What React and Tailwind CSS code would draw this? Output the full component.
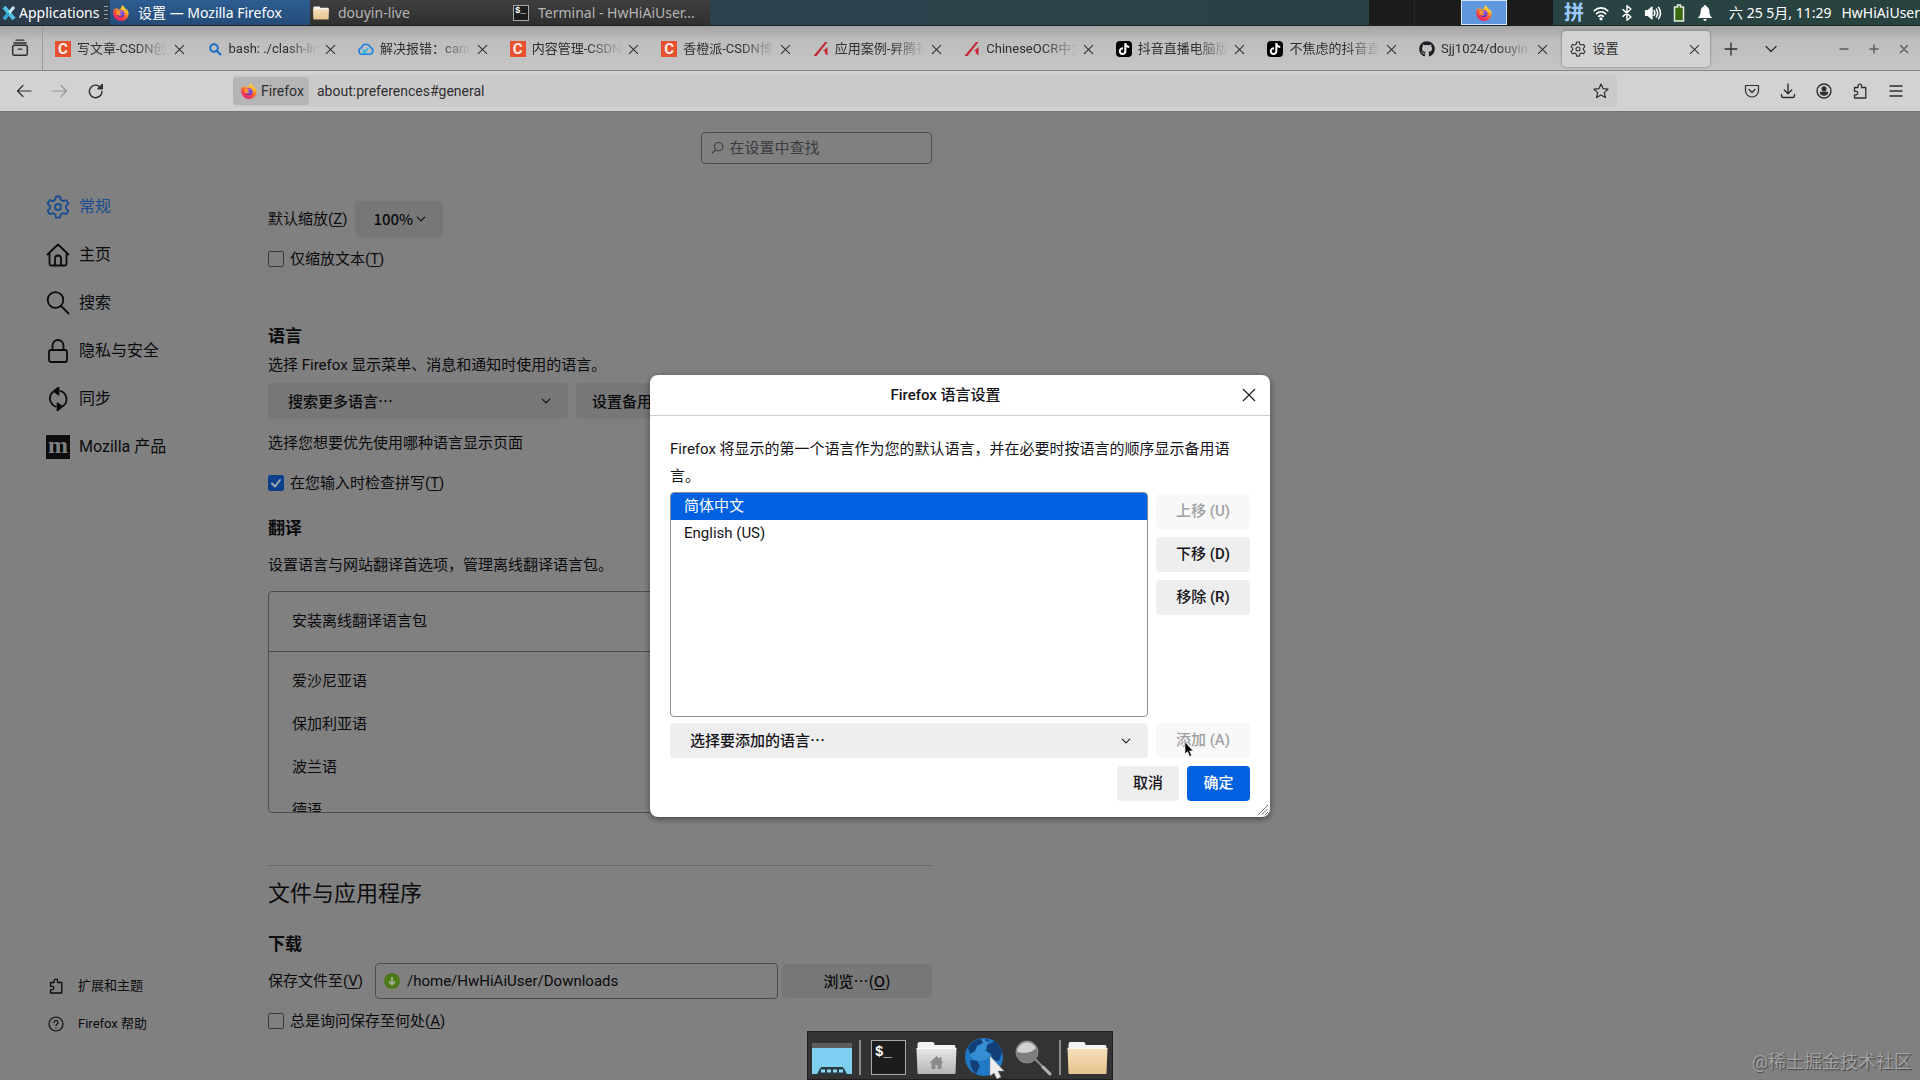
import React, { useId } from "react";
import { FaGithub, FaTiktok } from "react-icons/fa6";

const UI_FONT = 'Roboto, "Noto Sans CJK SC", sans-serif';
const CJK_FONT = '"Noto Sans CJK SC", sans-serif';

const strokeProps = {
  fill: "none",
  stroke: "currentColor",
  strokeLinecap: "round",
  strokeLinejoin: "round",
};

function Svg({ className, viewBox = "0 0 16 16", w = 1.2, children }) {
  return (
    <svg className={className} viewBox={viewBox} strokeWidth={w} aria-hidden="true" {...strokeProps}>
      {children}
    </svg>
  );
}

function FirefoxLogo({ className }) {
  const id = useId();
  return (
    <svg className={className} viewBox="0 0 32 32" aria-hidden="true">
      <defs>
        <linearGradient id={id + "f"} x1="0.8" y1="0" x2="0.25" y2="1">
          <stop offset="0" stopColor="#fff044" />
          <stop offset="0.3" stopColor="#ffb62b" />
          <stop offset="0.6" stopColor="#ff5634" />
          <stop offset="1" stopColor="#e8157c" />
        </linearGradient>
        <radialGradient id={id + "g"} cx="0.6" cy="0.3" r="0.8">
          <stop offset="0" stopColor="#9059ff" />
          <stop offset="1" stopColor="#5b2aa8" />
        </radialGradient>
      </defs>
      <path
        fill={`url(#${id}f)`}
        d="M30 12c-.7-1.800-2.200-3.700-3.300-4.300 1 1.900 1.500 3.700 1.700 5-1.800-4.500-4.900-6.300-7.400-10.300-.6-1-.7-1.600-.6-2.400-3.600 2-4.800 5.800-5 7.700-1.700.1-3.300.7-4.600 1.700-1.200-.9-1.800-2.700-1.700-4.600C6.700 5.900 5 8.200 4.600 9.800 3.600 9 3.500 7 3.900 5.600 1.500 8 0 12.500.5 17.500 1.300 25.500 8 32 16 32c8.500 0 15.200-6.700 15.200-15.200 0-1.700-.5-3.500-1.200-4.800z"
      />
      <circle cx="16" cy="17.500" r="7" fill={`url(#${id}g)`} />
      <path fill="#ff9a2e" d="M6 15c2-3 5-3.600 7.500-2.300 1.300.6 2.500.4 3 1.100-1 1.500-3.300 1-3.500 2.700 0 1.700 2 2.600 4.300 2-1.300 2.800-5.300 3.500-8 1.200C7.300 18.300 6.500 17 6 15z" />
    </svg>
  );
}

function FolderIcon({ className, home, gray }) {
  const id = useId();
  return (
    <svg className={className} viewBox="0 0 40 34" aria-hidden="true">
      <defs>
        <linearGradient id={id} x1="0" y1="0" x2="0" y2="1">
          <stop offset="0" stopColor={gray ? "#e8e8e8" : "#f6dfb9"} />
          <stop offset="1" stopColor={gray ? "#b5b5b5" : "#e6c38f"} />
        </linearGradient>
      </defs>
      <path fill="#f4f4f2" d="M1 4q0-3 2-3h13q2 0 2 3h20q1 0 1 3v4H1z" />
      <path fill={`url(#${id})`} d="M0 7h40l-1 25q0 1-1 1H2q-1 0-1-1z" />
      <path stroke="#fff" strokeOpacity="0.7" d="M0 7.500h40" />
      {home && <path fill="#8a8a8a" d="M13 22l7-7 3 3v-2h2v4l2 2h-2v6h-4v-4h-2v4h-4v-6z" />}
    </svg>
  );
}

function TerminalIcon({ className }) {
  return (
    <span className={className + " flex items-start border border-[#a9a9a9] bg-[#1c1c1c] font-bold text-white"} style={{ fontFamily: '"Liberation Mono", monospace' }}>
      <span>$_</span>
    </span>
  );
}

function Close({ className = "size-4" }) {
  return (
    <Svg className={className} w={1.1}>
      <path d="M3.500 3.500l9 9M12.500 3.500l-9 9" />
    </Svg>
  );
}
function Chevron({ className }) {
  return (
    <Svg className={className} w={1.4}>
      <path d="M3 5.500l5 5 5-5" />
    </Svg>
  );
}
function Gear({ className, w }) {
  return (
    <Svg className={className} viewBox="0 0 24 24" w={w}>
      <path d="M10 1.500h4l.8 3.300 2.300 1.300 3.300-1 2 3.500L20 11v2.400l2.400 2.200-2 3.500-3.300-1-2.300 1.400-.8 3.200h-4l-.8-3.200-2.300-1.400-3.300 1-2-3.500L4 13.300V11L1.600 8.600l2-3.500 3.300 1 2.300-1.300z" />
      <circle cx="12" cy="12" r="3" />
    </Svg>
  );
}
function Puzzle({ className }) {
  return (
    <Svg className={className} w={1.3}>
      <path d="M6 4.500V3a1.800 1.800 0 0 1 3.600 0v1.500h4.200V15H2.500v-3.200h1.600a1.700 1.700 0 0 0 0-3.400H2.500v-3.900z" />
    </Svg>
  );
}

const CsdnIcon = () => (
  <span className="flex size-4 items-center justify-center bg-[#e8502f] text-[15px] font-bold text-white/90">C</span>
);
const AscendIcon = () => (
  <svg className="size-4" viewBox="0 0 16 16" aria-hidden="true">
    <path fill="#c62430" d="M12 1h2.500L3.500 15H.5zM14.500 6v8.500l-3-2.500 1-1.500-2.500-.5z" />
  </svg>
);
const TiktokIcon = () => (
  <span className="flex size-4 items-center justify-center rounded bg-black text-white">
    <FaTiktok className="size-3" />
  </span>
);
const SearchTabIcon = () => (
  <svg className="size-4" viewBox="0 0 16 16" fill="none" stroke="#1d6fc4" strokeWidth="2" aria-hidden="true">
    <circle cx="7" cy="7" r="3.800" />
    <path d="M9.800 9.800l3.700 3.700" strokeLinecap="round" />
  </svg>
);
const CloudIcon = () => (
  <svg className="size-4" viewBox="0 0 16 16" fill="none" strokeWidth="1.600" aria-hidden="true">
    <path stroke="#1e7fe0" d="M4 13.300a3.300 3.300 0 0 1-.5-6.500A4.600 4.600 0 0 1 12.300 6.200 3.700 3.700 0 0 1 12 13.300z" />
    <path stroke="#22b8dd" d="M4.500 13l6-6M8.500 13l-4-4.500" />
  </svg>
);

const TABS = [
  ["写文章-CSDN创", CsdnIcon],
  ["bash: ./clash-lin", SearchTabIcon],
  ["解决报错：cann", CloudIcon],
  ["内容管理-CSDN", CsdnIcon],
  ["香橙派-CSDN博", CsdnIcon],
  ["应用案例-昇腾社", AscendIcon],
  ["ChineseOCR中文", AscendIcon],
  ["抖音直播电脑版", TiktokIcon],
  ["不焦虑的抖音直", TiktokIcon],
  ["Sjj1024/douyin", FaGithub],
];

function Taskbar() {
  return (
    <header
      className="flex h-[26px] shrink-0 items-stretch border-b border-[#1b2424] bg-linear-to-r from-[#2c4356] to-[#28423f] text-sm leading-none text-white"
      style={{ fontFamily: '"Noto Sans", "Noto Sans CJK SC", sans-serif' }}
    >
      <button className="flex w-[110px] items-center bg-[#2b3b4a] pl-0.5">
        <svg className="size-[14px] shrink-0" viewBox="0 0 14 14" aria-hidden="true">
          <path stroke="#4fc3e8" strokeWidth="4" d="M2 1l10 12" />
          <path stroke="#c4ebf7" strokeWidth="3" d="M12 1L2 13" />
          <path stroke="#2aa5d6" strokeWidth="3" d="M7 7l-5 6" />
        </svg>
        <span className="ml-[3px]">Applications</span>
        <span className="ml-auto mr-0.5 flex w-1 flex-col gap-[3px]">
          <i className="h-px bg-white/50" /><i className="h-px bg-white/50" /><i className="h-px bg-white/50" /><i className="h-px bg-white/50" />
        </span>
      </button>
      <button className="flex w-[200px] items-center bg-linear-to-b from-[#2d5d92] to-[#254b77] pl-[3px]">
        <FirefoxLogo className="size-4" />
        <span className="ml-[9px] whitespace-nowrap">设置 — Mozilla Firefox</span>
      </button>
      <button className="flex w-[200px] items-center bg-linear-to-b from-[#3f3f3f] to-[#2f2f2f] pl-[3px] text-[#b5b5b5]">
        <FolderIcon className="size-4" />
        <span className="ml-[9px]">douyin-live</span>
      </button>
      <button className="flex w-[200px] items-center bg-linear-to-b from-[#3f3f3f] to-[#2f2f2f] pl-[3px] text-[#b5b5b5]">
        <TerminalIcon className="size-4 pl-px pt-px text-[9px] leading-none" />
        <span className="ml-[9px] whitespace-nowrap">Terminal - HwHiAiUser...</span>
      </button>
      <div className="flex-1" />
      <div className="flex w-[184px] bg-[#1b1c1c]">
        <span className="w-[46px] border-r border-[#2a2b2b]" />
        <span className="w-[46px]" />
        <button aria-label="工作区 3" className="flex w-[46px] items-center justify-center border border-[#d6e4f5] bg-[#5e97dc]">
          <FirefoxLogo className="size-4" />
        </button>
        <span className="w-[46px]" />
      </div>
      <div className="flex w-[367px] items-center pl-[11px]">
        <span className="text-xl font-bold leading-none text-[#9cc9ff]">拼</span>
        <Svg className="ml-2 size-[18px]" w={1.5}>
          <path d="M2 6a8.500 8.500 0 0 1 12 0M4 8.600a5.500 5.500 0 0 1 8 0M6 11a2.800 2.800 0 0 1 4 0" />
          <circle cx="8" cy="13.200" r="0.700" fill="currentColor" />
        </Svg>
        <Svg className="ml-2 size-[18px]" w={1.3}>
          <path d="M4.500 5l7 6.500L8 14.500v-13L11.500 4.500l-7 6.500" />
        </Svg>
        <Svg className="ml-2 size-[18px]" w={1.4}>
          <path fill="currentColor" d="M1.500 6h2L7 3v10L3.500 10h-2z" />
          <path d="M9 6q1.200 2 0 4M11 4.500q2.200 3.500 0 7M13 3q3.300 5 0 10" />
        </Svg>
        <svg className="ml-2 h-[18px] w-[18px]" viewBox="0 0 18 18" aria-hidden="true">
          <path fill="#3a6b12" stroke="#e5eae5" strokeWidth="1.500" d="M4.500 3h3V1h3v2h3v14h-9z" />
        </svg>
        <svg className="ml-2 size-[18px]" viewBox="0 0 18 18" fill="#fff" aria-hidden="true">
          <path d="M9 1q1.200 0 1.200 1.200Q13 3.300 13.300 7q.2 5 3 7H1.700q2.800-2 3-7 .3-3.700 3.100-4.800Q7.800 1 9 1zM7.300 15h3.400q-.3 2-1.700 2t-1.700-2z" />
        </svg>
        <time className="ml-[15px] whitespace-nowrap">六 25 5月, 11:29</time>
        <span className="ml-2.5 whitespace-nowrap">HwHiAiUser</span>
      </div>
    </header>
  );
}

function TabStrip() {
  return (
    <div className="flex h-[45px] shrink-0 items-center border-b border-[#868686] bg-linear-to-b from-[#a4a4a4] via-[#bdbdbd] via-30% to-[#c5c5c5] pt-0.5 text-[13px] text-[#2e2e30]">
      <button aria-label="近期浏览" className="-mt-0.5 flex w-[43px] items-center justify-center self-stretch border-r border-[#9a9a9a] pr-0.5">
        <Svg className="size-[18px]" w={1.3}>
          <path d="M4.500 1h7M2.500 3.600h11" />
          <rect x="1.500" y="5.500" width="13" height="9" rx="1.500" />
          <path d="M6.500 9h3" />
        </Svg>
      </button>
      <div className="flex min-w-0 flex-1 pl-0.5" role="tablist">
        {TABS.map(([title, Icon]) => (
          <div key={title} className="h-9 min-w-0 flex-1" role="tab" aria-selected="false">
            <div className="flex h-full items-center px-2.5">
              <span className="shrink-0 text-[#1b1f23]"><Icon className="size-4" /></span>
              <span className="min-w-0 flex-1 overflow-hidden whitespace-nowrap pl-1.5 mask-r-from-65% mask-r-to-100%">{title}</span>
              <button aria-label="关闭标签页" className="ml-1"><Close className="size-[15px]" /></button>
            </div>
          </div>
        ))}
        <div className="h-9 min-w-0 flex-1" role="tab" aria-selected="true">
          <div className="mx-0.5 flex h-full items-center rounded bg-[#d2d2d2] px-2 shadow-[0_0_3px_rgba(0,0,0,0.4)]">
            <Gear className="size-4" w={1.6} />
            <span className="flex-1 pl-1.5">设置</span>
            <button aria-label="关闭标签页"><Close className="size-[15px]" /></button>
          </div>
        </div>
      </div>
      <div className="flex w-[208px] items-center pl-[11px]">
        <button aria-label="新建标签页">
          <Svg className="size-4" w={1.3}><path d="M8 2v12M2 8h12" /></Svg>
        </button>
        <button aria-label="列出标签页" className="ml-6"><Chevron className="size-4" /></button>
        <span className="ml-auto flex gap-[14px] pr-2 text-[#5e5e5e]">
          <button aria-label="最小化"><Svg className="size-4" w={1.5}><path d="M4 8h8" /></Svg></button>
          <button aria-label="最大化"><Svg className="size-4" w={1.5}><path d="M4 8h8M8 4v8" /></Svg></button>
          <button aria-label="关闭"><Svg className="size-4" w={1.5}><path d="M4.500 4.500l7 7M11.500 4.500l-7 7" /></Svg></button>
        </span>
      </div>
    </div>
  );
}

function Toolbar() {
  return (
    <div className="flex h-10 shrink-0 items-center bg-[#d2d2d2] text-sm text-[#2e2e30]">
      <div className="flex w-[233px] items-center gap-5 pl-4">
        <button aria-label="后退"><Svg className="size-4"><path d="M15 8H1.500M7 2.500L1.500 8 7 13.500" /></Svg></button>
        <button aria-label="前进" className="text-[#969696]"><Svg className="size-4"><path d="M1 8h13.500M9 2.500L14.500 8 9 13.500" /></Svg></button>
        <button aria-label="重新载入">
          <Svg className="size-4" w={1.4}><path d="M14 8.500A6.300 6.300 0 1 1 12 3.800l2 1.700M14.300 1.500v4.300H10z" /></Svg>
        </button>
      </div>
      <div className="flex h-8 min-w-0 flex-1 items-center rounded bg-[#cacaca]">
        <button className="flex h-7 w-[76px] items-center gap-1 rounded bg-[#b5b5b5] pl-2">
          <FirefoxLogo className="size-4" />
          Firefox
        </button>
        <input aria-label="地址" defaultValue="about:preferences#general" className="ml-2 min-w-0 flex-1 bg-transparent outline-none" />
        <button aria-label="添加书签" className="mr-2">
          <Svg className="size-4"><path d="M8 1l2.100 4.700 4.900.5-3.700 3.400 1.100 5L8 12l-4.400 2.600 1.100-5L1 6.200l4.900-.5z" /></Svg>
        </button>
      </div>
      <div className="flex w-[303px] justify-end gap-5 pr-4">
        <button aria-label="Pocket"><Svg className="size-4"><path d="M1.500 2.500h13V7.500a6.500 6.500 0 0 1-13 0zM5 6.500l3 3 3-3" /></Svg></button>
        <button aria-label="下载"><Svg className="size-4" w={1.4}><path d="M8 1v9.500M4.300 7L8 10.700 11.700 7M1.500 11.500v1.500q0 1.500 1.500 1.500h10q1.500 0 1.500-1.500v-1.500" /></Svg></button>
        <button aria-label="账户">
          <Svg className="size-4" w={1.4}>
            <circle cx="8" cy="8" r="7" />
            <circle cx="8" cy="5.800" r="1.900" fill="currentColor" />
            <path fill="currentColor" d="M4.500 9.500h7q-.5 2.500-3.500 2.500t-3.500-2.500z" />
          </Svg>
        </button>
        <button aria-label="扩展"><Puzzle className="size-4" /></button>
        <button aria-label="菜单"><Svg className="size-4" w={1.4}><path d="M2 3h12M2 8h12M2 13h12" /></Svg></button>
      </div>
    </div>
  );
}

const NAV = [
  ["常规", <Gear className="size-6" w={1.800} />],
  ["主页", <Svg className="size-6" viewBox="0 0 24 24" w={1.800}><path d="M1.500 11.500L12 1.500l10.500 10M3.500 10v11q0 1.500 1.500 1.500h14q1.500 0 1.500-1.500V10M9 22v-6.500a3 3 0 0 1 6 0V22" /></Svg>],
  ["搜索", <Svg className="size-6" viewBox="0 0 24 24" w={1.800}><circle cx="9.500" cy="9" r="7.800" /><path d="M15 14.800l7.500 7.700" /></Svg>],
  ["隐私与安全", <Svg className="size-6" viewBox="0 0 24 24" w={1.800}><rect x="3" y="11" width="18" height="12" rx="2" /><path d="M6.500 11V6.500a5.500 5.500 0 0 1 11 0V11" /></Svg>],
  ["同步", <Svg className="size-6" viewBox="0 0 24 24" w={1.800}><path d="M9.500 19.500A8.500 8.500 0 0 1 7 5M14.500 4A8.500 8.500 0 0 1 17 19" /><path fill="currentColor" d="M8 4l4.500-3.500v7zM16 19.500L11.500 23.500v-7z" /></Svg>],
  ["Mozilla 产品", <span className="flex size-6 items-center justify-center bg-[#0c0c0e] pb-1 text-2xl font-bold leading-none text-[#808080]" style={{ fontFamily: '"Liberation Serif", serif' }}>m</span>],
];

function Sidebar() {
  return (
    <nav className="flex w-[268px] shrink-0 flex-col pb-[37px] pl-[46px] pt-[71px]">
      {NAV.map(([label, icon], i) => (
        <a key={label} href="#general" className={i === 0 ? "flex h-12 items-center gap-[9px] text-[#174c92]" : "flex h-12 items-center gap-[9px]"}>
          {icon}
          {label}
        </a>
      ))}
      <div className="mt-auto text-[13px]">
        <a href="#addons" className="flex h-[38px] items-center gap-[14px] pl-0.5"><Puzzle className="size-4" />扩展和主题</a>
        <a href="#help" className="flex h-[38px] items-center gap-[14px] pl-0.5">
          <Svg className="size-4"><circle cx="8" cy="8" r="7" /><path d="M6 6.500a2 2 0 1 1 2.800 1.800Q8 8.700 8 9.600M8 11.800v.1" /></Svg>
          Firefox 帮助
        </a>
      </div>
    </nav>
  );
}

function Check({ label, hotkey, checked }) {
  return (
    <label className="flex h-6 items-center">
      <input type="checkbox" defaultChecked={checked} className="peer size-4 appearance-none rounded-xs border border-[#39393b] checked:border-[#0b3f8c] checked:bg-[#0b3f8c]" />
      <Svg className="-ml-4 hidden size-4 text-[#a8a8a8] peer-checked:block" w={2}><path d="M4 8.500l3 3 5-6.500" /></Svg>
      <span className="ml-1.5">{label}(<u className="underline-offset-2">{hotkey}</u>)</span>
    </label>
  );
}

function Dropdown({ label, text, className, chevron }) {
  return (
    <span className={"relative flex items-center rounded " + className} style={{ fontFamily: CJK_FONT }}>
      <select aria-label={label} className="h-full w-full appearance-none bg-transparent pl-[inherit] font-medium outline-none">
        <option>{text}</option>
      </select>
      <Chevron className={"pointer-events-none absolute size-3 " + chevron} />
    </span>
  );
}

function Settings() {
  return (
    <main className="w-[664px] pt-5">
      <label className="ml-auto flex h-8 w-[231px] items-center gap-[5px] rounded border border-[#4c4c4e] pl-2 text-[#3c3c3f]">
        <Svg className="size-4"><circle cx="9.500" cy="6.500" r="4.500" /><path d="M6.300 9.700L2.500 13.500" /></Svg>
        <input aria-label="在设置中查找" placeholder="在设置中查找" className="w-full bg-transparent outline-none placeholder:text-[#3c3c3f]" />
      </label>

      <div className="mt-[37px] flex h-9 items-center gap-2">
        <span>默认缩放(<u className="underline-offset-2">Z</u>)</span>
        <Dropdown label="默认缩放" text="100%" className="h-9 w-[88px] bg-[#777] pl-[9px]" chevron="right-4" />
      </div>
      <div className="mt-2.5"><Check label="仅缩放文本" hotkey="T" /></div>

      <h2 className="mt-[53px] text-[17px] font-semibold leading-6">语言</h2>
      <p className="mt-[5px] leading-6">选择 Firefox 显示菜单、消息和通知时使用的语言。</p>
      <div className="mt-1.5 flex h-9 gap-2">
        <Dropdown label="显示语言" text="搜索更多语言…" className="w-[300px] bg-[#777] pl-2.5" chevron="right-4" />
        <button className="rounded bg-[#777] px-4 font-medium" style={{ fontFamily: CJK_FONT }}>设置备用语言…</button>
      </div>
      <p className="mt-3 leading-6">选择您想要优先使用哪种语言显示页面</p>
      <div className="mt-4"><Check label="在您输入时检查拼写" hotkey="T" checked /></div>

      <h2 className="mt-[21px] text-[17px] font-semibold leading-6">翻译</h2>
      <p className="mt-[13px] leading-6">设置语言与网站翻译首选项，管理离线翻译语言包。</p>
      <div className="mt-[14px] h-[222px] overflow-hidden rounded border border-[#4c4c4e]">
        <h3 className="flex h-[60px] items-center border-b border-[#4c4c4e] pl-[23px]">安装离线翻译语言包</h3>
        <ul className="pl-[23px] pt-2">
          {["爱沙尼亚语", "保加利亚语", "波兰语", "德语"].map((l) => (
            <li key={l} className="flex h-[43px] items-center">{l}</li>
          ))}
        </ul>
      </div>

      <hr className="mt-[52px] border-[#666]" />
      <h1 className="mt-3 text-[22px] leading-8">文件与应用程序</h1>
      <h2 className="mt-[22px] text-[17px] font-semibold leading-6">下载</h2>
      <div className="mt-[7px] flex h-9 items-center">
        <label htmlFor="folder" className="w-[107px] shrink-0">保存文件至(<u className="underline-offset-2">V</u>)</label>
        <span className="flex h-full flex-1 items-center rounded border border-[#4c4c4e] pl-2">
          <svg className="size-4 shrink-0" viewBox="0 0 16 16" aria-hidden="true">
            <circle cx="8" cy="8" r="8" fill="#4d7a1b" />
            <path d="M8 4v7M5 8.500l3 3 3-3" fill="none" stroke="#a5b39a" strokeWidth="1.700" />
          </svg>
          <input id="folder" readOnly defaultValue="/home/HwHiAiUser/Downloads" className="ml-[7px] w-full bg-transparent outline-none" />
        </span>
        <button className="ml-1 h-[34px] w-[150px] rounded bg-[#777] font-medium" style={{ fontFamily: CJK_FONT }}>浏览…(<u className="underline-offset-2">O</u>)</button>
      </div>
      <div className="mt-2.5"><Check label="总是询问保存至何处" hotkey="A" /></div>
    </main>
  );
}

function LanguageDialog() {
  return (
    <section role="dialog" aria-labelledby="dlg-title" className="relative w-[620px] rounded-lg bg-white pb-4 text-[#15141a] shadow-[0_2px_6px_rgba(0,0,0,0.45)]">
      <header className="flex h-[41px] items-center border-b border-[#cfcfd2] pr-[13px]">
        <h2 id="dlg-title" className="flex-1 text-center font-medium">Firefox 语言设置</h2>
        <button aria-label="关闭"><Close className="size-4 scale-125" /></button>
      </header>
      <div className="px-5 pt-5">
        <p className="pb-0.5 leading-[27px]">Firefox 将显示的第一个语言作为您的默认语言，并在必要时按语言的顺序显示备用语言。</p>
        <div className="flex gap-2">
          <ul role="listbox" aria-label="语言" className="h-[225px] flex-1 overflow-hidden rounded border border-[#8f8f9d] leading-[27px]">
            <li role="option" aria-selected="true" className="bg-[#0061e0] pl-[13px] text-white">简体中文</li>
            <li role="option" aria-selected="false" className="pl-[13px]">English (US)</li>
          </ul>
          <div className="flex w-[94px] flex-col gap-2 pt-0.5 font-medium">
            <button disabled className="h-[35px] rounded bg-[#f8f8f8] text-[#a0a0a3]">上移 (U)</button>
            <button className="h-[35px] rounded bg-[#eee]">下移 (D)</button>
            <button className="h-[35px] rounded bg-[#eee]">移除 (R)</button>
          </div>
        </div>
        <div className="mt-1.5 flex h-[35px] gap-2 font-medium">
          <Dropdown label="选择要添加的语言" text="选择要添加的语言…" className="flex-1 bg-[#eee] pl-2.5" chevron="right-4" />
          <button disabled className="w-[94px] rounded bg-[#f8f8f8] text-[#a0a0a3]">添加 (A)</button>
        </div>
        <div className="mt-2 flex h-[35px] justify-end gap-2 font-medium">
          <button className="w-[62px] rounded bg-[#eee]">取消</button>
          <button className="w-[63px] rounded bg-[#0061e0] text-white">确定</button>
        </div>
      </div>
      <svg className="absolute bottom-0.5 right-0.5 size-[10px]" viewBox="0 0 10 10" stroke="#666" strokeWidth="0.900" aria-hidden="true">
        <path d="M0 10L10 0M3.500 10L10 3.500M7 10l3-3" />
      </svg>
      <svg className="absolute bottom-[59px] right-[76px] h-[17px] w-[10px]" viewBox="0 0 10 17" aria-hidden="true">
        <path d="M1 1v12l2.600-2.400 2 4.900 2-1-2-4.600h3.600z" fill="#000" stroke="#fff" strokeWidth="0.600" />
      </svg>
    </section>
  );
}

function Dock() {
  return (
    <div className="flex h-[49px] w-[306px] items-center border border-[#1f1f1f] bg-[#333] pl-1 pt-1">
      <svg className="h-8 w-10" viewBox="0 0 40 32" aria-hidden="true">
        <rect y="1" width="40" height="31" fill="#7fd0f0" />
        <rect y="1" width="40" height="5" fill="#5b5d5e" />
        <path fill="#263b45" d="M9 25h22l4 7H5z" />
        <path stroke="#8fdcf5" strokeWidth="3" strokeDasharray="4 2" d="M9 29h23" />
      </svg>
      <span className="ml-[7px] h-[35px] w-0.5 bg-[#8a8a8a]" />
      <TerminalIcon className="ml-2.5 size-[35px] pl-[3px] pt-1 text-[14px] leading-none" />
      <FolderIcon className="ml-2.5 h-[34px] w-[41px]" gray home />
      <svg className="ml-2 h-[42px] w-[41px]" viewBox="0 0 41 42" aria-hidden="true">
        <circle cx="19" cy="20" r="19" fill="#2079c4" />
        <circle cx="15" cy="13" r="11" fill="#4aa3e2" opacity="0.5" />
        <path fill="#123f78" d="M3 11q5-9 13-9l2 4-6 3-2 5-5 3zM5 23l7 1 3 5-4 8Q5 32 5 23zM22 8l8-4q6 5 7 12l-3 8-6-1-2-6-5-3zM20 2l4 1-2 2z" />
        <path fill="#ededed" stroke="#888" strokeWidth="0.500" d="M25 19v20l4-3 3 6 4-2-3-6h6z" />
      </svg>
      <svg className="ml-[9px] h-9 w-[37px]" viewBox="0 0 37 36" aria-hidden="true">
        <path stroke="#8c8c8c" strokeWidth="2" d="M19 18l13 13" />
        <path stroke="#b5b5b5" strokeWidth="3" strokeLinecap="round" d="M28 27l7 7" />
        <circle cx="12" cy="12" r="11" fill="#7d7d7d" stroke="#8f8f8f" strokeWidth="1" />
        <path fill="#d0d0d0" d="M2 12a10 10 0 0 1 19-4q-6 7-19 4z" />
      </svg>
      <span className="ml-[7px] h-[35px] w-0.5 bg-[#8a8a8a]" />
      <FolderIcon className="ml-1.5 h-[34px] w-[41px]" />
    </div>
  );
}

export default function App() {
  return (
    <div lang="zh-CN" className="flex h-screen flex-col overflow-hidden bg-[#808080]" style={{ fontFamily: UI_FONT }}>
      <Taskbar />
      <TabStrip />
      <Toolbar />
      <div className="relative flex min-h-0 flex-1 border-t border-[#777] text-[#0b0b0e]">
        <Sidebar />
        <div className="text-[15px]"><Settings /></div>
        <div className="absolute inset-0 flex items-center justify-center text-[15px]">
          <LanguageDialog />
        </div>
        <div className="absolute inset-x-0 bottom-0 flex justify-center"><Dock /></div>
        <p className="absolute bottom-1 right-2 text-lg text-[#a2a2a2] text-shadow-[1px_1px_1px_#444]">@稀土掘金技术社区</p>
      </div>
    </div>
  );
}
